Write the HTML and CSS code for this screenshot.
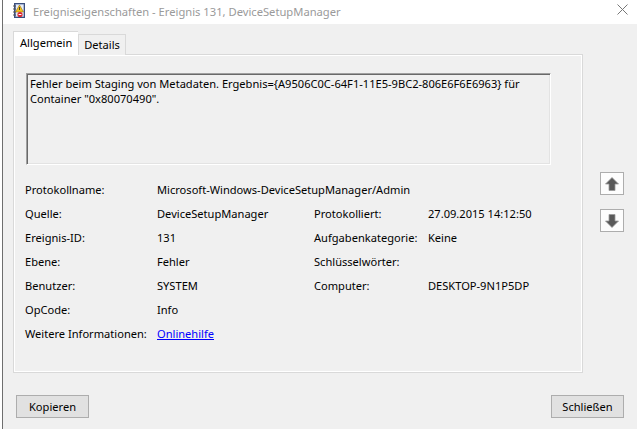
FILE: index.html
```html
<!DOCTYPE html>
<html lang="de">
  <head>
    <meta charset="UTF-8" />
    <title>Ereigniseigenschaften</title>
    <link rel="stylesheet" href="styles.css">
  </head>
  <body>
    <div class="window">
      <div class="titlebar">
        <svg class="app-icon" width="12" height="15" viewBox="0 0 12 15">
          <rect x="1.5" y="0.5" width="10" height="14" fill="#6f86b8" stroke="#3c4f7c" />
          <rect x="3" y="1.5" width="7.5" height="12" fill="#e8ecf5" />
          <line x1="0" y1="3" x2="3" y2="3" stroke="#555" />
          <line x1="0" y1="6" x2="3" y2="6" stroke="#555" />
          <line x1="0" y1="9" x2="3" y2="9" stroke="#555" />
          <line x1="0" y1="12" x2="3" y2="12" stroke="#555" />
          <path d="M6.5 2 L10.5 9 L2.5 9 Z" fill="#f2c21b" stroke="#9a7410" stroke-width="0.6" />
          <rect x="6.1" y="4" width="0.8" height="3" fill="#222" />
          <circle cx="7" cy="11.5" r="2.6" fill="#d9262f" />
          <rect x="5.6" y="11" width="2.8" height="1" fill="#fff" />
        </svg>
        <div class="title">Ereigniseigenschaften - Ereignis 131, DeviceSetupManager</div>
        <svg class="close" width="11" height="11" viewBox="0 0 11 11">
          <line x1="0.5" y1="0.5" x2="10.5" y2="10.5" stroke="#777" />
          <line x1="10.5" y1="0.5" x2="0.5" y2="10.5" stroke="#777" />
        </svg>
      </div>

      <div class="client">
        <div class="main">
          <div class="tabs">
            <div class="tab-strip">
              <div class="tab active">Allgemein</div>
              <div class="tab">Details</div>
            </div>
            <div class="tab-panel">
              <div class="message">Fehler beim Staging von Metadaten. Ergebnis={A9506C0C-64F1-11E5-9BC2-806E6F6E6963} für Container "0x80070490".</div>

              <div class="fields">
                <div>Protokollname:</div>
                <div class="wide">Microsoft-Windows-DeviceSetupManager/Admin</div>

                <div>Quelle:</div>
                <div>DeviceSetupManager</div>
                <div>Protokolliert:</div>
                <div>27.09.2015 14:12:50</div>

                <div>Ereignis-ID:</div>
                <div>131</div>
                <div>Aufgabenkategorie:</div>
                <div>Keine</div>

                <div>Ebene:</div>
                <div>Fehler</div>
                <div>Schlüsselwörter:</div>
                <div></div>

                <div>Benutzer:</div>
                <div>SYSTEM</div>
                <div>Computer:</div>
                <div>DESKTOP-9N1P5DP</div>

                <div>OpCode:</div>
                <div class="wide">Info</div>

                <div>Weitere Informationen:</div>
                <div class="wide"><a class="link" href="#">Onlinehilfe</a></div>
              </div>
            </div>
          </div>

          <div class="side">
            <div class="arrow-btn">
              <svg width="16" height="16" viewBox="0 0 16 16">
                <path d="M8 1.5 L14.5 8 L11 8 L11 14.5 L5 14.5 L5 8 L1.5 8 Z" fill="#595959" stroke="#999" stroke-width="0.8" />
              </svg>
            </div>
            <div class="arrow-btn">
              <svg width="16" height="16" viewBox="0 0 16 16">
                <path d="M8 14.5 L14.5 8 L11 8 L11 1.5 L5 1.5 L5 8 L1.5 8 Z" fill="#595959" stroke="#999" stroke-width="0.8" />
              </svg>
            </div>
          </div>
        </div>

        <div class="buttons">
          <div class="button">Kopieren</div>
          <div class="button">Schließen</div>
        </div>
      </div>
    </div>
  </body>
</html>
```

FILE: styles.css
```css
html,
body {
  margin: 0;
  padding: 0;
  width: 637px;
  height: 429px;
  overflow: hidden;
  background-color: #fff;
  font-family: "Noto Sans", sans-serif;
  font-size: 11.1px;
  color: #000;
}

.window {
  margin-left: 2px;
  width: 634px;
  height: 429px;
  border-left: 1px solid #6e6e6e;
  display: flex;
  flex-direction: column;
}

.titlebar {
  height: 24px;
  display: flex;
  align-items: center;
  background-color: #fff;
}

.app-icon {
  margin-left: 10px;
  margin-top: -3px;
}

.title {
  margin-left: 8px;
  color: #9a9a9a;
  flex: 1;
  margin-top: -2px;
  font-size: 11.2px;
}

.close {
  margin-right: 9px;
  margin-top: -5px;
}

.client {
  flex: 1;
  background-color: #f0f0f0;
  display: flex;
  flex-direction: column;
}

.main {
  display: flex;
}

.tabs {
  margin-left: 10px;
  width: 570px;
}

.tab-strip {
  display: flex;
  align-items: flex-end;
  height: 30px;
}

.tab {
  height: 20px;
  line-height: 20px;
  padding: 0 5px;
  border: 1px solid #d9d9d9;
  border-bottom: none;
  background-color: #f0f0f0;
  margin-bottom: -1px;
  position: relative;
}

.tab.active {
  height: 23px;
  line-height: 22px;
  padding: 0 6px 0 6px;
  background-color: #fff;
  border-right: none;
  z-index: 1;
}

.tab-panel {
  height: 299px;
  border: 1px solid #d9d9d9;
  box-shadow: inset 1px 1px #fff, inset -1px -1px #fff;
  padding: 18px 0 0 12px;
}

.message {
  width: 518px;
  height: 88px;
  padding: 2px 2px 0 3px;
  border: 1px solid;
  border-color: #a0a0a0 #fff #fff #a0a0a0;
  box-shadow: inset 1px 1px #696969, inset -1px -1px #e3e3e3;
  line-height: 15px;
}

.fields {
  display: grid;
  grid-template-columns: 132px 157px 114px auto;
  grid-auto-rows: 24px;
  align-items: center;
  margin-top: 12px;
  margin-left: -1px;
}

.fields .wide {
  grid-column: 2 / 5;
}

.link {
  color: #0000ff;
  text-decoration: underline;
}

.side {
  display: flex;
  flex-direction: column;
  gap: 14px;
  margin-left: 17px;
  margin-top: 148px;
}

.arrow-btn {
  width: 22px;
  height: 21px;
  border: 1px solid #adadad;
  background-color: #fdfdfd;
  display: flex;
  align-items: center;
  justify-content: center;
}

.buttons {
  display: flex;
  justify-content: space-between;
  padding: 22px 13px 0 13px;
}

.button {
  width: 71px;
  height: 21px;
  line-height: 21px;
  text-align: center;
  background-color: #e1e1e1;
  border: 1px solid #adadad;
}
```
